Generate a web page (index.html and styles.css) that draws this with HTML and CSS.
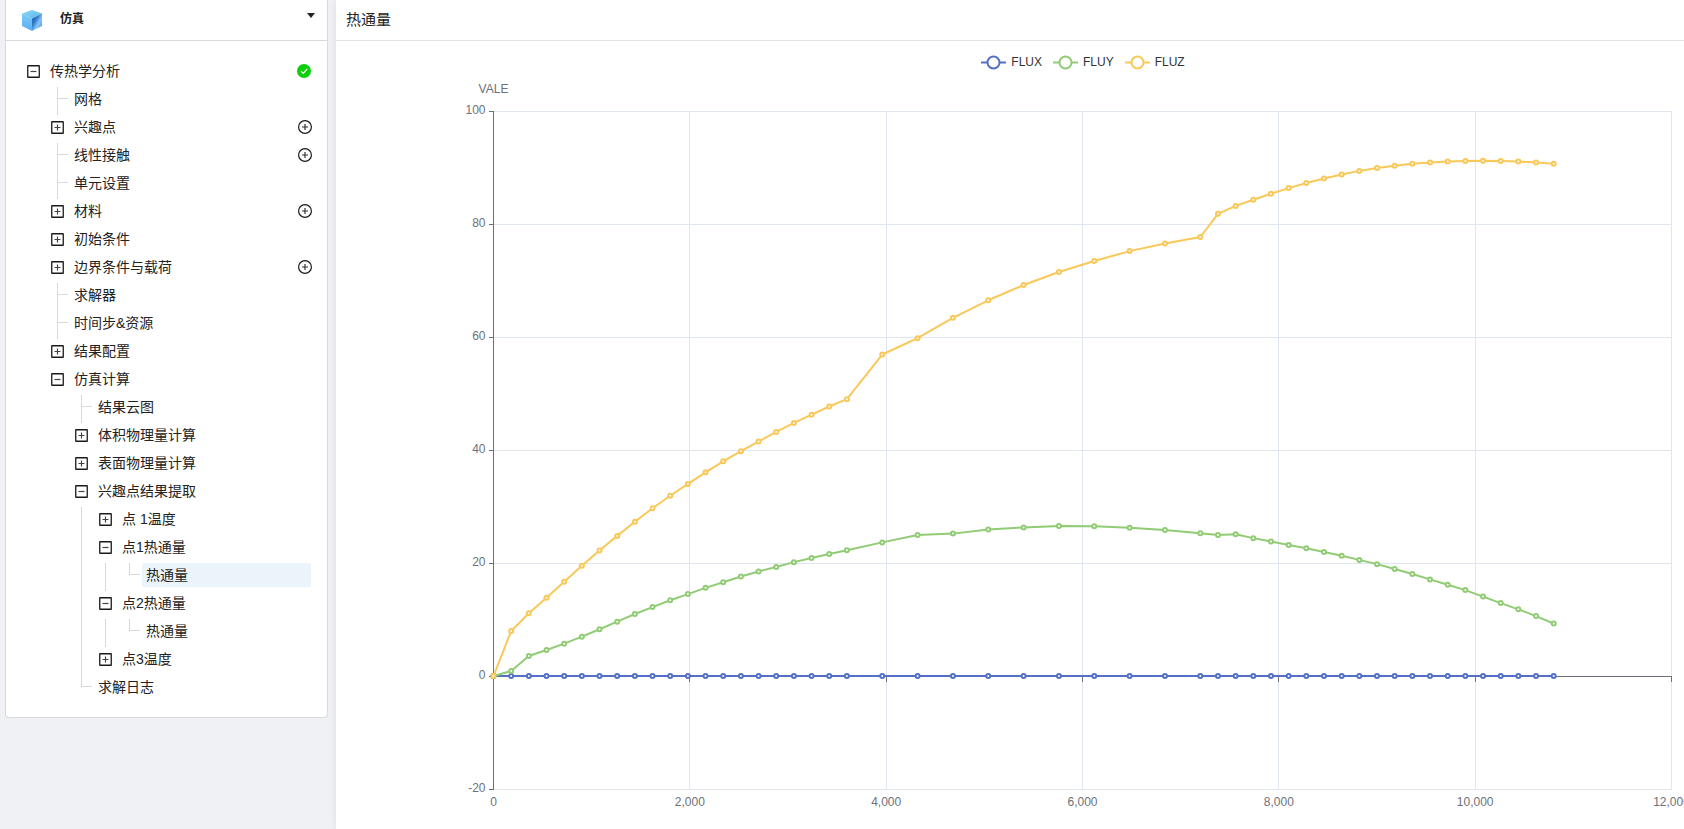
FILE: index.html
```html
<!DOCTYPE html>
<html lang="zh-CN">
<head>
<meta charset="utf-8">
<title>仿真</title>
<meta name="viewport" content="width=device-width, initial-scale=1">
<link rel="stylesheet" href="styles.css">
</head>
<body>
<svg class="sprite" aria-hidden="true">
  <symbol id="i-plus-square" viewBox="0 0 13 13"><rect x=".75" y=".75" width="11.5" height="11.5" rx=".2" fill="none" stroke="#1a1a1a" stroke-width="1.3"/><path d="M3.5 6.5h6M6.5 3.5v6" stroke="#444" stroke-width="1.2"/></symbol>
  <symbol id="i-minus-square" viewBox="0 0 13 13"><rect x=".75" y=".75" width="11.5" height="11.5" rx=".2" fill="none" stroke="#1a1a1a" stroke-width="1.3"/><path d="M3.5 6.5h6" stroke="#444" stroke-width="1.2"/></symbol>
  <symbol id="i-plus-circle" viewBox="0 0 14 14"><circle cx="7" cy="7" r="6.4" fill="none" stroke="#1a1a1a" stroke-width="1.2"/><path d="M4 7h6M7 4v6" stroke="#333" stroke-width="1.2"/></symbol>
  <symbol id="i-check" viewBox="0 0 14 14"><circle cx="7" cy="7" r="7" fill="#0acf0a"/><path d="M4 7.1l2.2 2.2 4-4.3" fill="none" stroke="#fff" stroke-width="1.2"/></symbol>
</svg>
<div class="app">
  <aside class="side">
    <section class="card">
      <header class="card-head">
        <svg class="logo" viewBox="0 0 20 21" aria-hidden="true">
          <defs>
            <linearGradient id="g-top" x1="0" y1="0" x2="1" y2="1"><stop offset="0" stop-color="#86d6f6"/><stop offset="1" stop-color="#5fb6ea"/></linearGradient>
            <linearGradient id="g-left" x1="0" y1="0" x2="0" y2="1"><stop offset="0" stop-color="#7accf6"/><stop offset="1" stop-color="#5aaef2"/></linearGradient>
            <linearGradient id="g-right" x1="0" y1="0" x2="1" y2="1"><stop offset="0" stop-color="#1f62b0"/><stop offset=".35" stop-color="#2f78c8"/><stop offset=".6" stop-color="#86c4f6"/><stop offset="1" stop-color="#3f92e6"/></linearGradient>
          </defs>
          <path d="M10 0l10 3.5L10 8.500 0 3.500z" fill="url(#g-top)"/>
          <path d="M0 3.500l10 5V21L0 16z" fill="url(#g-left)"/>
          <path d="M20 3.500l-10 5V21l10-5z" fill="url(#g-right)"/>
        </svg>
        <h1 class="card-title">仿真</h1>
        <button class="caret" type="button" aria-label="展开菜单"><svg viewBox="0 0 8 5" aria-hidden="true"><path d="M0 0h8L4 5z" fill="#222"/></svg></button>
      </header>
      <ul class="tree" role="tree" id="tree"></ul>
    </section>
  </aside>
  <main class="main">
    <header class="main-head"><h2 class="main-title">热通量</h2></header>
    <div class="legend" id="legend"></div>
    <svg class="chart" id="chart" role="img" aria-label="热通量曲线"></svg>
  </main>
</div>
<script src="app.js"></script>
</body>
</html>
```
FILE: styles.css
```css
* { box-sizing: border-box; }

body {
  margin: 0;
  background: #f0f1f5;
  color: #222;
  font: 14px/24px "Liberation Sans", "Noto Sans CJK SC", sans-serif;
}

button {
  padding: 0;
  border: 0;
  background: none;
  color: inherit;
  font: inherit;
  cursor: pointer;
}

svg { display: block; }
.sprite { position: absolute; width: 0; height: 0; }

.app {
  display: flex;
  min-height: 100vh;
}

.side {
  flex: none;
  width: 336px;
  padding: 0 8px 0 5px;
}

.card {
  padding-bottom: 14px;
  border: 1px solid #d9dadd;
  border-top: 0;
  border-radius: 0 0 4px 4px;
  background: #fff;
}

.card-head {
  display: flex;
  height: 41px;
  padding: 0 12px 0 16px;
  align-items: center;
  border-bottom: 1px solid #d9d9d9;
}

.logo { width: 20px; height: 21px; }

.card-title {
  flex: 1;
  margin: 0 0 2px 18px;
  font-size: 12px;
  font-weight: 700;
}

.caret {
  align-self: flex-start;
  padding: 13px 0 0;
}
.caret svg { width: 8px; height: 5px; }

.tree {
  margin: 0;
  padding: 18px 16px 0;
  list-style: none;
}

.node {
  display: flex;
  height: 28px;
  align-items: stretch;
}

.indent, .switch {
  position: relative;
  flex: none;
  width: 24px;
}

.switch { height: 24px; padding-right: 1px; display: grid; place-items: center; }
.switch svg { width: 13px; height: 13px; }

.line, .leaf, .leaf-last { height: 28px; }

.line::before, .leaf::before, .leaf-last::before {
  content: "";
  position: absolute;
  top: 0;
  left: 11px;
  height: 100%;
  border-left: 1px solid #d9d9d9;
}
.leaf-last::before { height: 12px; }

.leaf::after, .leaf-last::after {
  content: "";
  position: absolute;
  top: 11px;
  left: 12px;
  width: 10px;
  border-top: 1px solid #d9d9d9;
}

.label {
  flex: 1;
  height: 24px;
  padding: 0 4px;
  border-radius: 2px;
  text-align: left;
  white-space: nowrap;
}
.label.selected { background: #ebf4fb; }

.badge { flex: none; height: 24px; display: grid; place-items: center; }
.badge svg { width: 14px; height: 14px; }
button.badge { margin-right: -1px; }

.main {
  flex: 1;
  min-width: 0;
  display: flex;
  flex-direction: column;
  background: #fff;
  box-shadow: 0 0 8px rgba(0, 0, 0, .08);
}

.main-head {
  height: 41px;
  padding: 8px 10px;
  border-bottom: 1px solid #e4e4e4;
}

.main-title {
  margin: 0;
  font-size: 15px;
  font-weight: 400;
}

.legend {
  display: flex;
  height: 36px;
  padding: 10px 12px 0 158px;
  justify-content: center;
  gap: 11px;
  font-size: 12px;
  color: #333;
}
.legend-item { display: flex; height: 24px; gap: 5px; line-height: 22px; }
.legend-item svg { width: 25px; height: 24px; }

.chart {
  flex: 1;
  width: 100%;
  min-height: 300px;
  font-size: 12px;
  fill: #6e7079;
}
.grid { stroke: #e0e6f1; shape-rendering: crispEdges; }
.axis { stroke: #6e7079; shape-rendering: crispEdges; }
.series { fill: none; stroke-width: 2; stroke-linejoin: bevel; }
.dot { fill: #fff; stroke-width: 2; }
.end { text-anchor: end; }
.mid { text-anchor: middle; }
```
FILE: app.js
```js
// Tree rows: [level, kind, text, badge, indent columns that carry a line]
// kind: '+' closed, '-' open, '|' leaf, 'L' last leaf
const rows = [
  [0, '-', '传热学分析', 'ok'],
  [1, '|', '网格'],
  [1, '+', '兴趣点', 'add'],
  [1, '|', '线性接触', 'add'],
  [1, '|', '单元设置'],
  [1, '+', '材料', 'add'],
  [1, '+', '初始条件'],
  [1, '+', '边界条件与载荷', 'add'],
  [1, '|', '求解器'],
  [1, '|', '时间步&资源'],
  [1, '+', '结果配置'],
  [1, '-', '仿真计算'],
  [2, '|', '结果云图'],
  [2, '+', '体积物理量计算'],
  [2, '+', '表面物理量计算'],
  [2, '-', '兴趣点结果提取'],
  [3, '+', '点 1温度', '', [2]],
  [3, '-', '点1热通量', '', [2]],
  [4, 'L', '热通量', 'sel', [2, 3]],
  [3, '-', '点2热通量', '', [2]],
  [4, 'L', '热通量', '', [2, 3]],
  [3, '+', '点3温度', '', [2]],
  [2, 'L', '求解日志']
];

const icon = id => `<svg aria-hidden="true"><use href="#i-${id}"/></svg>`;

document.getElementById('tree').innerHTML = rows.map(([level, kind, text, badge, lines = []]) => {
  let html = '';
  for (let i = 0; i < level; i++) html += `<span class="indent${lines.includes(i) ? ' line' : ''}"></span>`;
  if (kind === '+') html += `<button class="switch" type="button" aria-label="展开${text}">${icon('plus-square')}</button>`;
  if (kind === '-') html += `<button class="switch" type="button" aria-label="收起${text}">${icon('minus-square')}</button>`;
  if (kind === '|') html += '<span class="switch leaf"></span>';
  if (kind === 'L') html += '<span class="switch leaf-last"></span>';
  html += `<button class="label${badge === 'sel' ? ' selected' : ''}" type="button">${text.replace('&', '&amp;')}</button>`;
  if (badge === 'ok') html += `<span class="badge">${icon('check')}</span>`;
  if (badge === 'add') html += `<button class="badge" type="button" aria-label="添加${text}">${icon('plus-circle')}</button>`;
  return `<li class="node" role="treeitem" aria-level="${level + 1}">${html}</li>`;
}).join('');

// Time steps: 180 s, then 360 s between 3600 and 7200, then 180 s again
const times = [];
for (let t = 0; t <= 10800; t += t >= 3600 && t < 7200 ? 360 : 180) times.push(t);

const series = [
  { name: 'FLUX', color: '#5470c6', data: times.map(() => 0) },
  { name: 'FLUY', color: '#91cc75', data: [
    0, 0.88, 3.54, 4.6, 5.72, 6.96, 8.28, 9.61, 10.97, 12.2, 13.4, 14.5, 15.6, 16.6, 17.6, 18.5, 19.3, 20.15, 20.9, 21.6, 22.25,
    23.65, 24.95, 25.2, 25.95, 26.3, 26.55, 26.5, 26.25, 25.85, 25.25,
    24.95, 25.1, 24.4, 23.8, 23.2, 22.6, 21.95, 21.3, 20.55, 19.8, 18.95, 18.05, 17.1, 16.15, 15.2, 14.05, 12.9, 11.8, 10.6, 9.3] },
  { name: 'FLUZ', color: '#fac858', data: [
    0, 7.96, 11.1, 13.86, 16.7, 19.5, 22.2, 24.8, 27.3, 29.7, 31.9, 34, 36.05, 38, 39.8, 41.5, 43.2, 44.8, 46.25, 47.7, 49,
    56.9, 59.8, 63.4, 66.5, 69.2, 71.5, 73.45, 75.2, 76.55, 77.7,
    81.8, 83.2, 84.3, 85.35, 86.35, 87.25, 88.05, 88.75, 89.4, 89.9, 90.3, 90.65, 90.9, 91.05, 91.15, 91.2, 91.15, 91.05, 90.9, 90.65] }
];

document.getElementById('legend').innerHTML = series.map(s =>
  `<span class="legend-item"><svg viewBox="0 0 25 24" aria-hidden="true" stroke="${s.color}" stroke-width="2" fill="#fff"><path d="M0 11.5h25"/><circle cx="12.5" cy="11.5" r="6"/></svg>${s.name}</span>`
).join('');

const chart = document.getElementById('chart');

function draw() {
  const { width, height } = chart.getBoundingClientRect();
  const left = 157.5, right = width - 12.5, top = 34, bottom = height - 40;
  const x = v => left + (right - left) * v / 12000;
  const y = v => bottom - (bottom - top) * (v + 20) / 120;
  // Pixel centres keep one-pixel rules crisp
  const cx = v => Math.floor(x(v)) + 0.5;
  const cy = v => Math.round(y(v)) + 0.5;
  const line = (cls, x1, y1, x2, y2) => `<line class="${cls}" x1="${x1}" y1="${y1}" x2="${x2}" y2="${y2}"/>`;
  let out = '';
  for (let v = -20; v <= 100; v += 20) {
    out += line('grid', left, cy(v), right, cy(v));
    out += line('axis', left - 5, cy(v), left, cy(v));
    out += `<text class="end" x="${left - 8}" y="${Math.round(y(v)) + 3}">${v}</text>`;
  }
  for (let v = 0; v <= 12000; v += 2000) {
    out += line('grid', cx(v), top, cx(v), bottom);
    out += line('axis', cx(v), cy(0), cx(v), cy(0) + 5);
    out += `<text class="mid" x="${x(v)}" y="${bottom + 17}">${v.toLocaleString('en-US')}</text>`;
  }
  out += line('axis', left, cy(0), right, cy(0));
  out += line('axis', cx(0), top, cx(0), bottom + 1);
  out += `<text class="mid" x="${left}" y="${top - 18}">VALE</text>`;
  for (const s of series) {
    const pts = s.data.map((v, i) => [x(times[i]), y(v)]);
    out += `<polyline class="series" stroke="${s.color}" points="${pts.map(p => p.join()).join(' ')}"/>`;
    out += pts.map(p => `<circle class="dot" stroke="${s.color}" cx="${p[0]}" cy="${p[1]}" r="2"/>`).join('');
  }
  chart.innerHTML = out;
}

draw();
window.addEventListener('resize', draw);
```
